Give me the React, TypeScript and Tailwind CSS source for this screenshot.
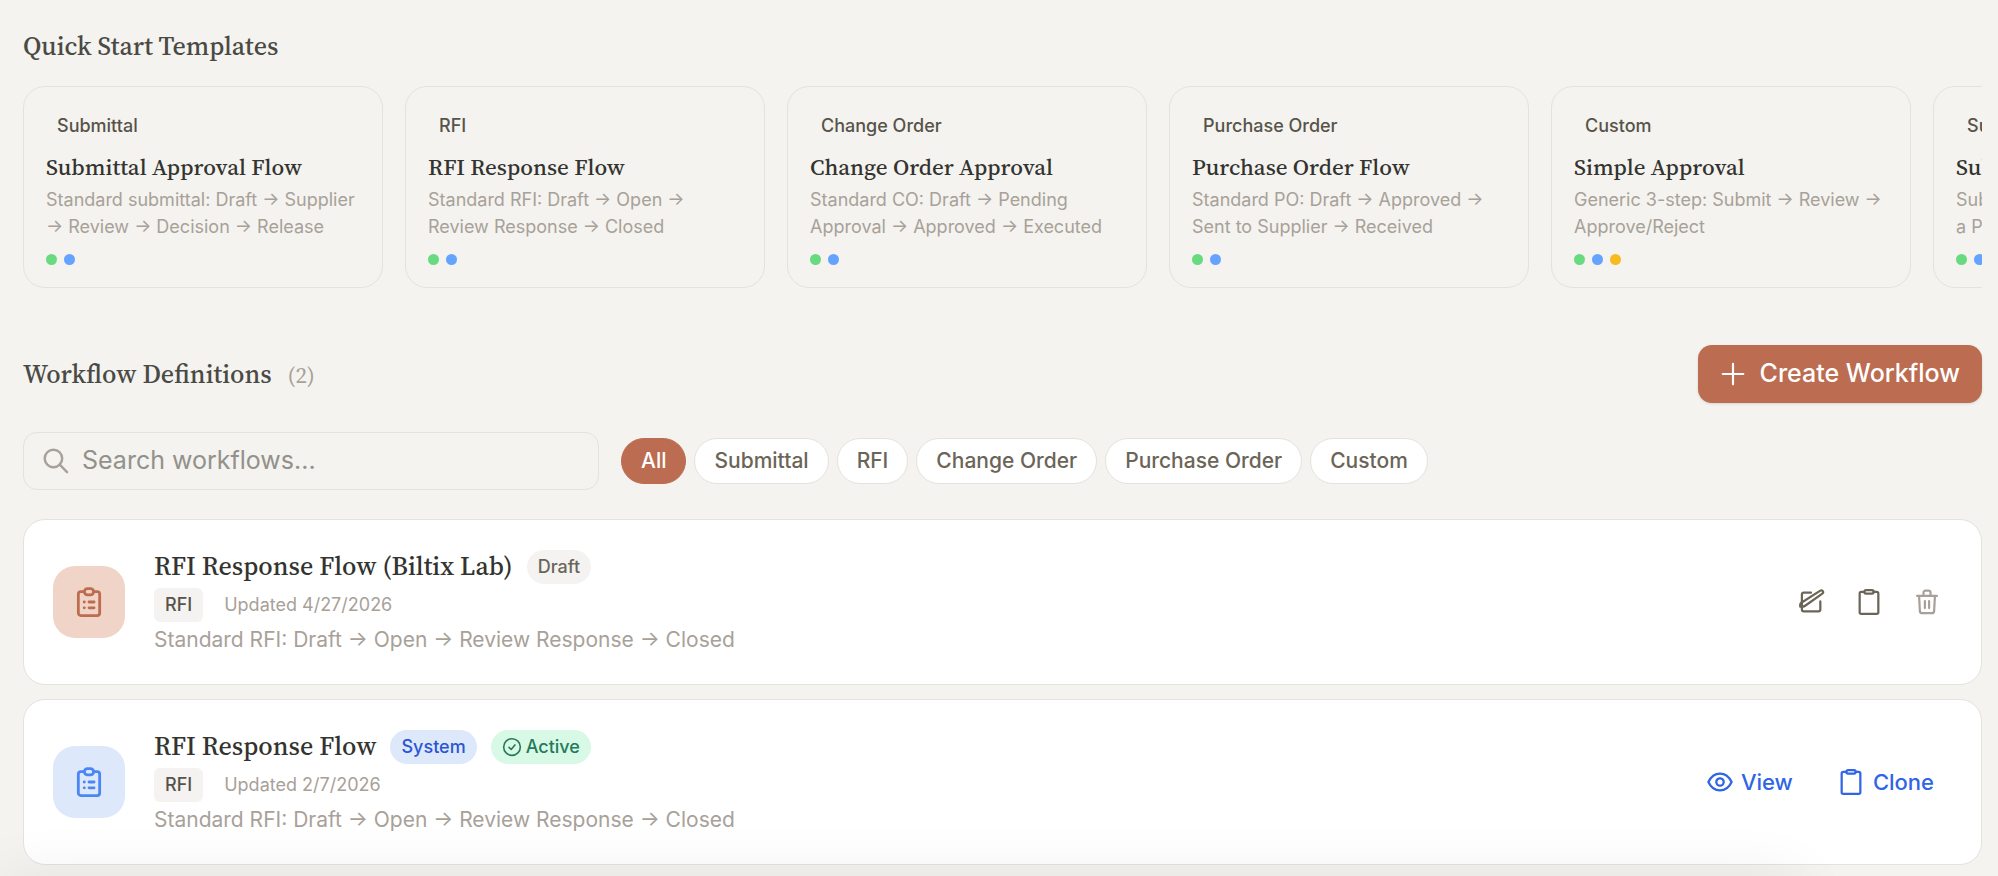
import React, { useState } from "react";

const SERIF = "font-['Source_Serif_4','Source_Serif_Pro','Liberation_Serif',serif]";

const TEMPLATES = [
    {
        type: "Submittal",
        name: "Submittal Approval Flow",
        description: "Standard submittal: Draft → Supplier → Review → Decision → Release",
        dots: ["bg-[#68da7f]", "bg-[#64a3ff]"]
    },
    {
        type: "RFI",
        name: "RFI Response Flow",
        description: "Standard RFI: Draft → Open → Review Response → Closed",
        dots: ["bg-[#68da7f]", "bg-[#64a3ff]"]
    },
    {
        type: "Change Order",
        name: "Change Order Approval",
        description: "Standard CO: Draft → Pending Approval → Approved → Executed",
        dots: ["bg-[#68da7f]", "bg-[#64a3ff]"]
    },
    {
        type: "Purchase Order",
        name: "Purchase Order Flow",
        description: "Standard PO: Draft → Approved → Sent to Supplier → Received",
        dots: ["bg-[#68da7f]", "bg-[#64a3ff]"]
    },
    {
        type: "Custom",
        name: "Simple Approval",
        description: "Generic 3-step: Submit → Review → Approve/Reject",
        dots: ["bg-[#68da7f]", "bg-[#64a3ff]", "bg-[#f7bb20]"]
    },
    {
        type: "Submittal",
        name: "Submittal to PO",
        description: "Submittal approval that creates a\u00a0Purchase Order",
        dots: ["bg-[#68da7f]", "bg-[#64a3ff]"]
    }
];

const FILTERS = ["All", "Submittal", "RFI", "Change Order", "Purchase Order", "Custom"];

const Icon = ({ className = "", strokeWidth = 2, children }) => (
    <svg
        className={`shrink-0 ${className}`}
        viewBox="0 0 24 24"
        fill="none"
        stroke="currentColor"
        strokeWidth={strokeWidth}
        strokeLinecap="round"
        strokeLinejoin="round"
        aria-hidden="true"
    >
        {children}
    </svg>
);

const ClipboardIcon = () => (
    <Icon className="size-7" strokeWidth={1.9}>
        <path d="M8 3.400H5.400A1.400 1.400 0 0 0 4 4.800v16a1.400 1.400 0 0 0 1.400 1.400h13.200a1.400 1.400 0 0 0 1.400-1.400V4.800a1.400 1.400 0 0 0-1.400-1.400H16" />
        <rect x="8" y="1.800" width="8" height="3" rx="1.500" />
    </Icon>
);

const ClipboardListIcon = () => (
    <Icon className="size-8" strokeWidth={2.1}>
        <path d="M8.500 4.200H5.900A1.900 1.900 0 0 0 4 6.100v14.200A1.900 1.900 0 0 0 5.900 22.200h12.200a1.900 1.900 0 0 0 1.900-1.900V6.100a1.900 1.900 0 0 0-1.900-1.900H15.500" />
        <rect x="8.500" y="1.900" width="7" height="4.800" rx="2.400" />
        <path d="M8.400 12h.1M12 12h3.800M8.400 16.400h.1M12 16.400h3.800" />
    </Icon>
);

const EditIcon = () => (
    <Icon className="size-7" strokeWidth={1.9}>
        <path d="M12 4H5.800A1.600 1.600 0 0 0 4.200 5.600V18.400A1.600 1.600 0 0 0 5.800 20H18.400a1.600 1.600 0 0 0 1.600-1.600V11.500" />
        <path d="M20 2.300a1.500 1.500 0 0 1 1.700 2.500L7 15.200c-1 .7-2.500 1-4.200.8-.3-1.500 0-2.700.9-3.400z" />
    </Icon>
);

const TrashIcon = () => (
    <Icon className="size-7" strokeWidth={1.9}>
        <path d="M3.500 6.800h17M5.200 6.800l.7 13a1.900 1.900 0 0 0 1.900 1.800h8.400a1.900 1.900 0 0 0 1.900-1.800l.7-13M9 6.800V3.900a1.600 1.600 0 0 1 1.600-1.600h2.800a1.600 1.600 0 0 1 1.600 1.600v2.900M10.200 11.200v6M13.800 11.200v6" />
    </Icon>
);

const EyeIcon = () => (
    <Icon className="size-[26px]" strokeWidth={2.1}>
        <path d="M1.300 12C3.600 7 7.400 4.200 12 4.200S20.400 7 22.700 12C20.400 17 16.600 19.800 12 19.800S3.600 17 1.300 12z" />
        <circle cx="12" cy="12" r="3.400" />
    </Icon>
);

const TemplateCard = ({ type, name, description, dots }) => (
    <li className="w-[360px] shrink-0 rounded-[22px] border border-[#e4e2dd] p-[22px]">
        <span className="inline-block rounded-lg px-[11px] text-lg/[34px] font-medium text-[#57534a]">{type}</span>
        <h3 className={`${SERIF} mt-[10px] text-[23px]/7 font-medium text-[#33332f]`}>{name}</h3>
        <p className="mt-[5px] text-lg/[27px] text-[#a8a199]">{description}</p>
        <div className="mt-[14px] flex gap-[7px]">
            {dots.map((dot) => (
                <span key={dot} className={`size-[11px] rounded-full ${dot}`} />
            ))}
        </div>
    </li>
);

const WorkflowRow = ({ name, updated, iconClass, badges, actions }) => (
    <li className="flex items-center gap-[29px] rounded-[22px] border border-[#e4e2dd] bg-white px-[29px] py-[29px]">
        <div className={`flex size-[72px] shrink-0 items-center justify-center rounded-[22px] ${iconClass}`}>
            <ClipboardListIcon />
        </div>
        <div className="min-w-0 flex-1">
            <div className="flex items-center gap-[14px]">
                <h3 className={`${SERIF} text-[26px]/[35px] font-medium text-[#33332f]`}>{name}</h3>
                {badges}
            </div>
            <div className="mt-1 flex items-center gap-[21px] text-lg/[34px]">
                <span className="rounded-md bg-[#f4f3f1] px-[11px] font-medium text-[#57534a]">RFI</span>
                <span className="text-[#a8a199]">Updated {updated}</span>
            </div>
            <p className="mt-[3px] text-[21px]/[30px] text-[#a8a199]">Standard RFI: Draft → Open → Review Response → Closed</p>
        </div>
        <div className="flex items-center gap-2">{actions}</div>
    </li>
);

const App = () => {
    const [filter, setFilter] = useState("All");

    return (
        <div className="min-h-screen overflow-hidden bg-[#f4f3ef] pt-7 pr-4 pb-2 pl-[23px] font-['Inter',sans-serif]">
            <h2 className={`${SERIF} text-[26px]/9 font-medium text-[#4a4a45]`}>Quick Start Templates</h2>
            <ul className="mt-[22px] flex gap-[22px] overflow-hidden">
                {TEMPLATES.map((t) => (
                    <TemplateCard key={t.name} {...t} />
                ))}
            </ul>

            <div className="mt-[57px] flex items-center justify-between">
                <h2 className={`${SERIF} text-[26px]/9 font-medium text-[#4a4a45]`}>
                    Workflow Definitions
                    <span className="ml-4 text-[23px] font-normal text-[#a8a199]">(2)</span>
                </h2>
                <button className="flex h-[58px] items-center gap-[14px] rounded-[14px] bg-[#bc6c50] px-[22px] text-[25px] font-medium text-white shadow-sm">
                    <Icon className="size-[26px]" strokeWidth={2}>
                        <path d="M12 2.500v19M2.500 12h19" />
                    </Icon>
                    Create Workflow
                </button>
            </div>

            <div className="mt-[29px] flex items-center gap-[22px]">
                <label className="flex h-[58px] w-[576px] items-center gap-3 rounded-[14px] border border-[#e4e2dd] px-[18px] text-[#a8a199]">
                    <Icon className="size-7" strokeWidth={2.1}>
                        <circle cx="9.800" cy="9.800" r="7.500" />
                        <path d="M15.200 15.200l6.300 6.300" />
                    </Icon>
                    <input
                        type="text"
                        aria-label="Search workflows"
                        placeholder="Search workflows..."
                        className="min-w-0 flex-1 bg-transparent text-[25px] text-[#33332f] outline-none placeholder:text-[#92918b]"
                    />
                </label>
                <div className="flex gap-2">
                    {FILTERS.map((f) => (
                        <button
                            key={f}
                            onClick={() => setFilter(f)}
                            className={`h-[46px] rounded-full border px-[19px] text-[21px] font-medium ${
                                f === filter ? "border-[#bc6c50] bg-[#bc6c50] text-white" : "border-[#e4e2dd] bg-white text-[#6b6558]"
                            }`}
                        >
                            {f}
                        </button>
                    ))}
                </div>
            </div>

            <ul className="mt-[29px] flex flex-col gap-[14px]">
                <WorkflowRow
                    name="RFI Response Flow (Biltix Lab)"
                    updated="4/27/2026"
                    iconClass="bg-[#f0d4c7] text-[#bc6c50]"
                    badges={<span className="rounded-full bg-[#f4f3f1] px-[11px] text-lg/[34px] font-medium text-[#6b6558]">Draft</span>}
                    actions={
                        <>
                            <button aria-label="Edit" className="p-[11px] text-[#6b6558]"><EditIcon /></button>
                            <button aria-label="Clone" className="p-[11px] text-[#6b6558]"><ClipboardIcon /></button>
                            <button aria-label="Delete" className="p-[11px] text-[#a8a199]"><TrashIcon /></button>
                        </>
                    }
                />
                <WorkflowRow
                    name="RFI Response Flow"
                    updated="2/7/2026"
                    iconClass="bg-[#dde8fb] text-[#4b86f5]"
                    badges={
                        <>
                            <span className="rounded-full bg-[#dde8fb] px-[11px] text-lg/[34px] font-medium text-[#2b55d3]">System</span>
                            <span className="flex items-center gap-1 rounded-full bg-[#d7f9e6] px-[11px] text-lg/[34px] font-medium text-[#26795a]">
                                <Icon className="size-5" strokeWidth={1.9}>
                                    <circle cx="12" cy="12" r="10" />
                                    <path d="M8.500 12.500l2.500 2.500 4.500-5.500" />
                                </Icon>
                                Active
                            </span>
                        </>
                    }
                    actions={
                        <>
                            <button className="flex items-center gap-2 px-[18px] py-3 text-[22px] font-medium text-[#2f65e6]"><EyeIcon />View</button>
                            <button className="flex items-center gap-2 px-[18px] py-3 text-[22px] font-medium text-[#2f65e6]"><ClipboardIcon />Clone</button>
                        </>
                    }
                />
            </ul>
            <div className="pointer-events-none fixed top-full right-[200px] left-0 h-20 shadow-[0_0_60px_rgba(0,0,0,0.07)]" />
        </div>
    );
};

export default App;
